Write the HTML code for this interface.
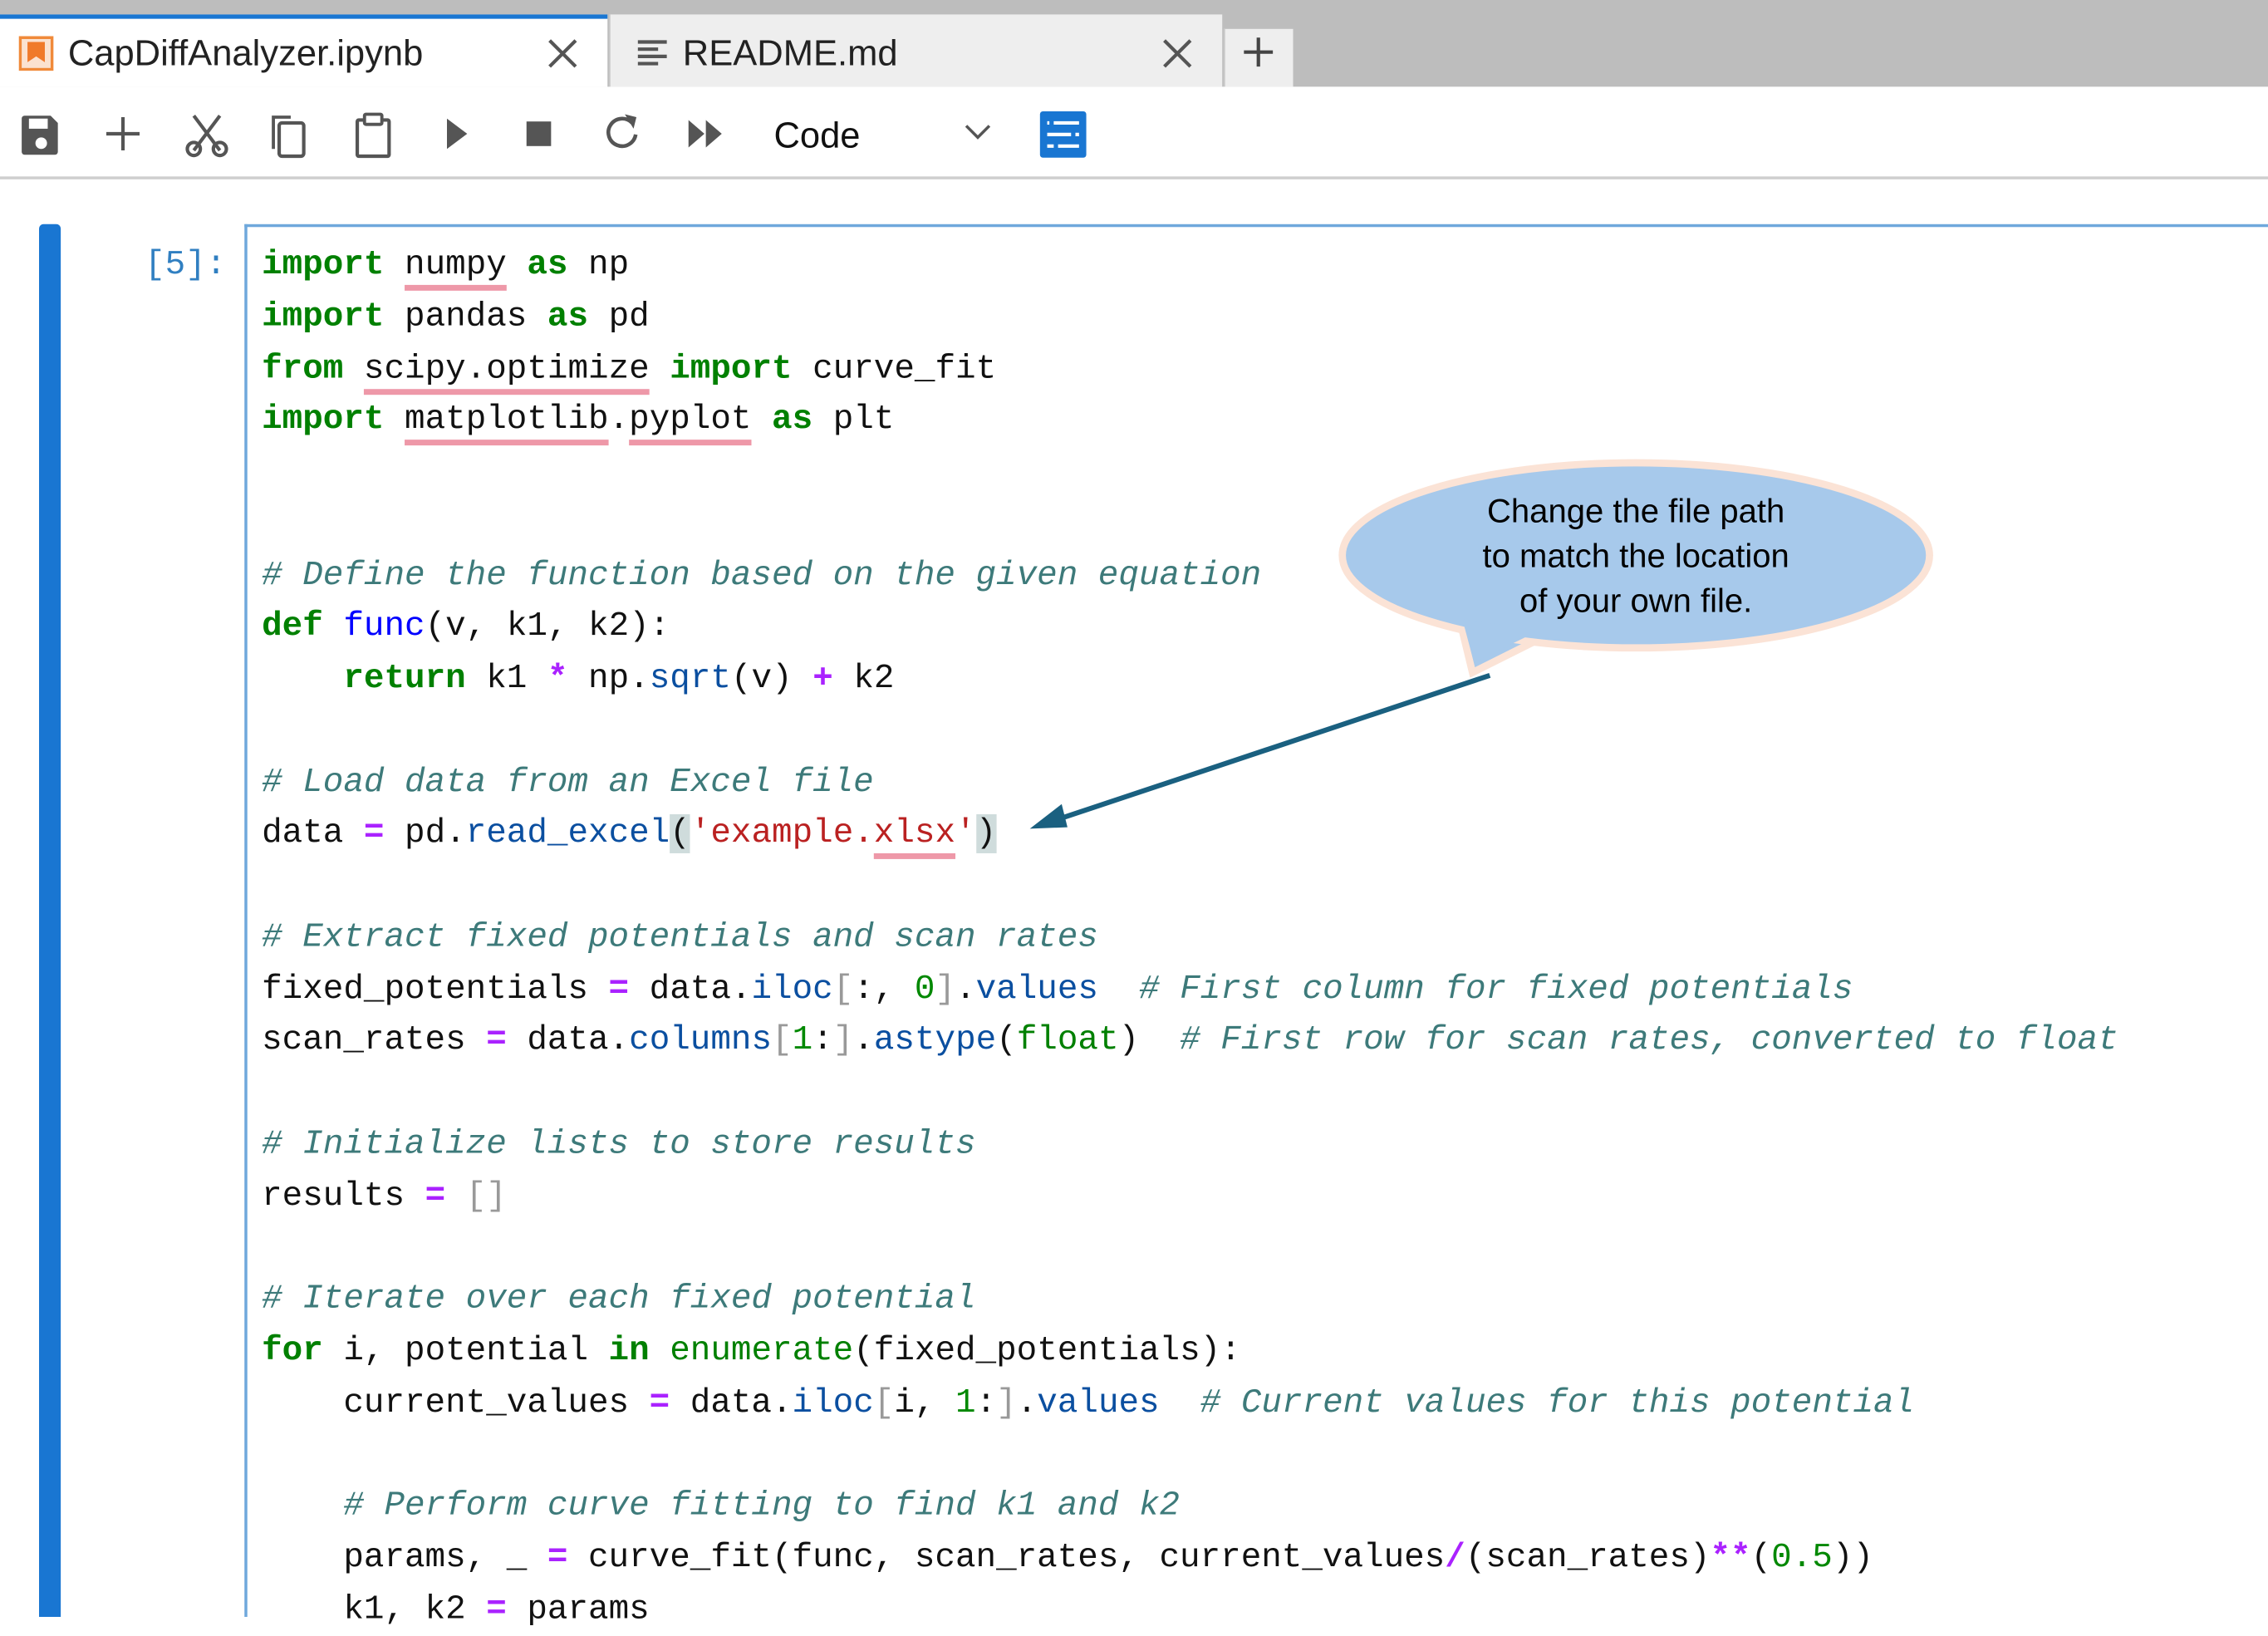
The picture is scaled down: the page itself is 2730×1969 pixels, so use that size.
<!DOCTYPE html>
<html><head><meta charset="utf-8"><style>
html,body{margin:0;padding:0;background:#fff;overflow:hidden;width:2730px;height:1946px}
#w{position:absolute;left:0;top:0;width:1568px;height:1118px;transform:scale(1.74107,1.7406);transform-origin:0 0;background:#fff;font-family:"Liberation Sans",sans-serif}
.abs{position:absolute}
#top{left:0;top:0;width:1568px;height:60px;background:#bdbdbd}
.tab{top:10px;height:50px;background:#eeeeee;border-left:1px solid #c8c8c8}
.tabt{font-size:25px;color:#222}
#tb{left:0;top:60px;width:1568px;height:62px;background:#fff;border-bottom:2px solid #cfcfcf}
pre{margin:0;font-family:"Liberation Mono",monospace;font-size:23.5px;line-height:35.75px;color:#111;letter-spacing:0}
.k{color:#008000;font-weight:bold}
.c{color:#3d7a7a;font-style:italic}
.s{color:#ba2121}
.o{color:#aa22ff;font-weight:bold}
.n{color:#008800}
.p{color:#0b4fa0}
.f{color:#0000ff}
.b{color:#008000}
.g{color:#999}
.u{text-decoration:underline;text-decoration-color:#ee98a8;text-decoration-thickness:4px;text-underline-offset:8px}
.m{background:#cfdcdc}
</style></head><body><div id="w">
<div id="top" class="abs"></div>
<div class="abs" style="left:0;top:10px;width:420px;height:50px;background:#fff;border-top:3px solid #1976d2;box-sizing:border-box"></div>
<svg class="abs" style="left:13px;top:25px" width="24" height="24" viewBox="0 0 24 24"><rect x="1" y="1" width="22" height="22" fill="#fbe2d0" stroke="#f08a3a" stroke-width="2"/><path d="M6 4h12v14l-6-4-6 4z" fill="#f07a2a"/></svg>
<div class="abs tabt" style="left:47px;top:23px">CapDiffAnalyzer.ipynb</div>
<svg class="abs" style="left:378px;top:26px" width="22" height="22" viewBox="0 0 22 22"><path d="M2 2L20 20M20 2L2 20" stroke="#555" stroke-width="2.4"/></svg>
<div class="abs tab" style="left:421px;width:423px"></div>
<svg class="abs" style="left:440px;top:26px" width="22" height="22" viewBox="0 0 22 22"><path d="M1 3h20M1 8h14M1 13h20M1 18h14" stroke="#555" stroke-width="2.4"/></svg>
<div class="abs tabt" style="left:472px;top:23px">README.md</div>
<svg class="abs" style="left:803px;top:26px" width="22" height="22" viewBox="0 0 22 22"><path d="M2 2L20 20M20 2L2 20" stroke="#555" stroke-width="2.4"/></svg>
<div class="abs tab" style="left:846px;width:47px;top:20px;height:40px"></div>
<svg class="abs" style="left:858px;top:24px" width="24" height="24" viewBox="0 0 24 24"><path d="M12 2v20M2 12h20" stroke="#444" stroke-width="2.4"/></svg>
<div id="tb" class="abs"></div>
<svg class="abs" style="left:0;top:70px" width="760" height="46" viewBox="0 0 760 46">
<g fill="#555" stroke="#555">
<path d="M17 10h18l5 5v20a2 2 0 0 1-2 2h-21a2 2 0 0 1-2-2v-23a2 2 0 0 1 2-2z" stroke="none"/>
<rect x="20" y="12" width="13" height="7" fill="#fff" stroke="none"/>
<circle cx="28.5" cy="29" r="4" fill="#fff" stroke="none"/>
<path d="M85 11v23M73.5 22.5h23" fill="none" stroke-width="2.4"/>
<path d="M134 10l18 24M152 10l-18 24" fill="none" stroke-width="2.4"/>
<circle cx="134" cy="33" r="4.5" fill="none" stroke-width="2.4"/><circle cx="152" cy="33" r="4.5" fill="none" stroke-width="2.4"/>
<path d="M189 33V11h12" fill="none" stroke-width="2.2"/><rect x="193" y="15" width="17" height="23" rx="2" fill="none" stroke-width="2.4"/>
<rect x="247" y="13" width="22" height="25" rx="1" fill="none" stroke-width="2.4"/><rect x="252" y="9" width="12" height="7" rx="1" fill="#fff" stroke-width="2.2"/>
<path d="M309 12l14 10.5-14 10.5z" stroke="none"/>
<rect x="364" y="14" width="17" height="17" stroke="none"/>
<path d="M437 15a9.5 9.5 0 1 0 2.5 8" fill="none" stroke-width="2.6"/><path d="M432 9l8 2-2 8z" stroke="none"/>
<path d="M476 13l11 9.5-11 9.5zM488 13l11 9.5-11 9.5z" stroke="none"/>
<path d="M668 17l8 8 8-8" fill="none" stroke-width="2"/>
</g>
<text x="535" y="32" font-family="Liberation Sans,sans-serif" font-size="25" fill="#111">Code</text>
<rect x="719" y="7" width="32" height="32" rx="2" fill="#1976d2"/>
<path d="M724 15h22M724 23h22M724 31h22" stroke="#fff" stroke-width="2.4"/>
<path d="M727 12v6M742 20v6M730 28v6" stroke="#1976d2" stroke-width="3"/>
</svg>
<div class="abs" style="left:27px;top:155px;width:15px;height:963px;background:#1976d2;border-radius:3px 3px 0 0"></div>
<pre class="abs" style="left:100px;top:166px;color:#307fc1">[5]:</pre>
<div class="abs" style="left:169px;top:155px;width:1399px;height:963px;border-left:2px solid #6fa8dc;border-top:2px solid #6fa8dc;box-sizing:border-box;background:#fff"></div>
<pre class="abs" style="left:181px;top:166px"><span class="k">import</span> <span class="u">numpy</span> <span class="k">as</span> np
<span class="k">import</span> pandas <span class="k">as</span> pd
<span class="k">from</span> <span class="u">scipy.optimize</span> <span class="k">import</span> curve_fit
<span class="k">import</span> <span class="u">matplotlib</span>.<span class="u">pyplot</span> <span class="k">as</span> plt


<span class="c"># Define the function based on the given equation</span>
<span class="k">def</span> <span class="f">func</span>(v, k1, k2):
    <span class="k">return</span> k1 <span class="o">*</span> np.<span class="p">sqrt</span>(v) <span class="o">+</span> k2

<span class="c"># Load data from an Excel file</span>
data <span class="o">=</span> pd.<span class="p">read_excel</span><span class="m">(</span><span class="s">'example.<span class="u">xlsx</span>'</span><span class="m">)</span>

<span class="c"># Extract fixed potentials and scan rates</span>
fixed_potentials <span class="o">=</span> data.<span class="p">iloc</span><span class="g">[</span>:, <span class="n">0</span><span class="g">]</span>.<span class="p">values</span>  <span class="c"># First column for fixed potentials</span>
scan_rates <span class="o">=</span> data.<span class="p">columns</span><span class="g">[</span><span class="n">1</span>:<span class="g">]</span>.<span class="p">astype</span>(<span class="b">float</span>)  <span class="c"># First row for scan rates, converted to float</span>

<span class="c"># Initialize lists to store results</span>
results <span class="o">=</span> <span class="g">[]</span>

<span class="c"># Iterate over each fixed potential</span>
<span class="k">for</span> i, potential <span class="k">in</span> <span class="b">enumerate</span>(fixed_potentials):
    current_values <span class="o">=</span> data.<span class="p">iloc</span><span class="g">[</span>i, <span class="n">1</span>:<span class="g">]</span>.<span class="p">values</span>  <span class="c"># Current values for this potential</span>

    <span class="c"># Perform curve fitting to find k1 and k2</span>
    params, _ <span class="o">=</span> curve_fit(func, scan_rates, current_values<span class="o">/</span>(scan_rates)<span class="o">**</span>(<span class="n">0.5</span>))
    k1, k2 <span class="o">=</span> params</pre>
<svg class="abs" style="left:0;top:0" width="1568" height="1118" viewBox="0 0 1568 1118">
<path d="M1010 432 L1018 465 L1068 440 Z" fill="#a7c9eb" stroke="#fbe3d6" stroke-width="5" stroke-linejoin="miter"/>
<ellipse cx="1131" cy="384" rx="203" ry="64" fill="#a7c9eb" stroke="#fbe3d6" stroke-width="5"/>
<path d="M1011 428 L1019 458 L1064 436 Z" fill="#a7c9eb"/>
<line x1="1030" y1="467" x2="730" y2="567" stroke="#1a6080" stroke-width="3.5"/>
<path d="M712 573 L734 556 L738 572 Z" fill="#1a6080"/>
<text font-family="Liberation Sans,sans-serif" font-size="23" fill="#000" text-anchor="middle"><tspan x="1131" y="361">Change the file path</tspan><tspan x="1131" y="392">to match the location</tspan><tspan x="1131" y="423">of your own file.</tspan></text>
</svg>
</div></body></html>
